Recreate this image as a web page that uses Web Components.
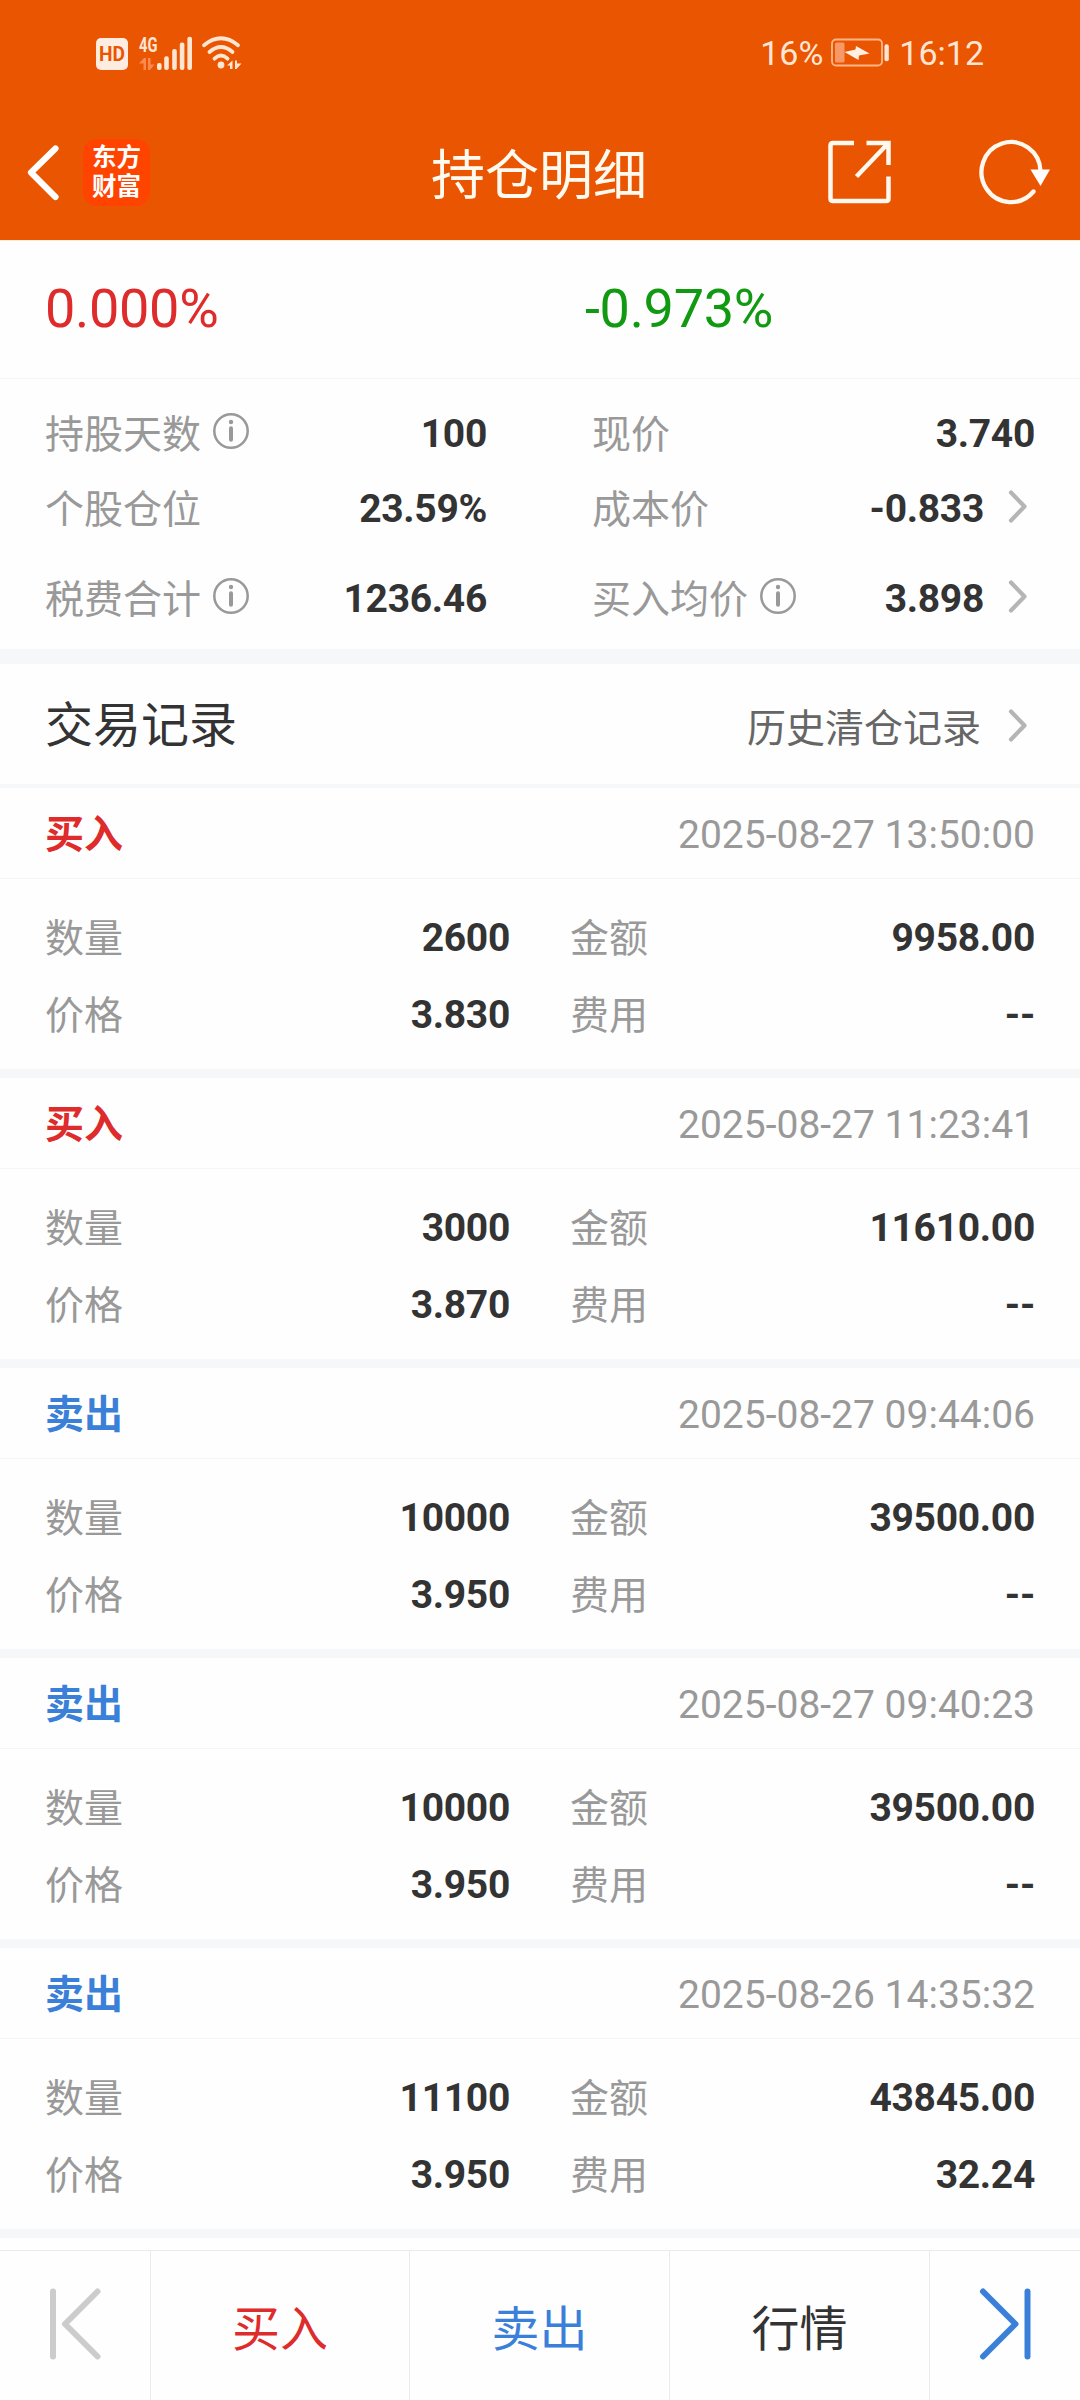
<!DOCTYPE html>
<html lang="zh-CN">
<head>
<meta charset="UTF-8">
<title>持仓明细</title>
<style>
    body{
        margin:0;
        width:1080px;
        height:2400px;
        overflow:hidden;
        background:#fefefe;
        font-family:Roboto, "Noto Sans CJK SC", sans-serif;
        --bar-color:#ea5502;
        --red:#de2b2b;
        --green:#119a11;
        --blue:#3a80d9;
        --text:#333;
        --label:#999;
        --line:#f5f6f7;
        --band:#f6f7f9;
    }
</style>
</head>
<body>
<position-page></position-page>

<script>
// base class, every component only gives its template and its styles
class BaseElement extends HTMLElement{
    constructor(){
        super();
        this.attachShadow({mode:"open"});
    }
    attr(name){
        return this.getAttribute(name) || '';
    }
    getTemplate(){
        const template = document.createElement('template');
        template.innerHTML = `
            <style>${this.getStyles()}</style>
            ${this.getMarkup()}
        `;
        return template;
    }
    render(){
        this.shadowRoot.appendChild(this.getTemplate().content.cloneNode(true));
    }
    connectedCallback(){
        if(!this.shadowRoot.hasChildNodes()) this.render();
    }
}

const ICONS = {
    hd:`<svg width="32" height="32" viewBox="0 0 32 32"><rect width="32" height="32" rx="5" fill="#ffece0"/><text x="16" y="23" text-anchor="middle" textLength="26" lengthAdjust="spacingAndGlyphs" font-family="Roboto" font-size="20.5" font-weight="700" fill="#ea5502">HD</text></svg>`,
    signal:`<svg width="54" height="35" viewBox="0 0 54 35" fill="#ffe6d3">
        <text x="0" y="16" textLength="18.5" lengthAdjust="spacingAndGlyphs" font-family="Roboto" font-size="20.5" font-weight="700">4G</text>
        <g fill="#fa8a50"><path d="M0 27.500 5 22h2v12H4.500v-6.500zM9 22h2.500v6.500H15.500l-4.500 5.500H9z"/></g>
        <rect x="18" y="27" width="4.6" height="7" rx="2"/>
        <rect x="25.2" y="20.3" width="4.6" height="13.700" rx="2"/>
        <rect x="33.2" y="13" width="4.6" height="21" rx="2"/>
        <rect x="40.800" y="6.500" width="4.600" height="27.500" rx="2"/>
        <rect x="48.400" y=".7" width="4.600" height="33.300" rx="2"/>
    </svg>`,
    wifi:`<svg width="40" height="34" viewBox="0 0 40 34" fill="none" stroke="#ffe6d3" stroke-width="3.800" stroke-linecap="round">
        <path d="M2 9.200Q19 -4.600 36 9.200M7.500 16Q19 6 30.500 16M12.500 22.700Q19 16.500 25.500 22.700"/>
        <circle cx="19" cy="29" r="3.400" fill="#ffe6d3" stroke="none"/>
        <path d="M25 29.500 30.500 24.500v8.500h-2.500v-3.500zM33 24.500h2v3h4.500l-5 5.500h-1.500z" fill="#ffe6d3" stroke="none"/>
    </svg>`,
    battery:`<svg width="58" height="30" viewBox="0 0 58 30"><rect x="1" y="1.500" width="50" height="26" rx="4" fill="none" stroke="#ffb789" stroke-width="1.800"/><rect x="4" y="4.500" width="9.500" height="20" rx="1.500" fill="#f69966"/><path d="M13.500 14 24.500 11.500 25 8 38.500 15.500 28 17.500 27.500 22z" fill="#fff0e2"/><rect x="53.500" y="6.300" width="4.300" height="17" rx="2" fill="#ffe6d3"/></svg>`,
    back:`<svg width="32" height="56" viewBox="0 0 32 56"><path d="M28.500 4.500 4 28.500 28.500 53" fill="none" stroke="#fff" stroke-width="6.200" stroke-linecap="round" stroke-linejoin="round"/></svg>`,
    open:`<svg width="64" height="64" viewBox="0 0 64 64" fill="none" stroke="#fff8ef" stroke-width="4.500"><path d="M26 3H5Q2.500 3 2.500 5.500V58.500Q2.500 61 5 61H58Q60.500 61 60.500 58.500V36.500M60.500 25V3H38.500M60 3.500 28.500 36.500"/></svg>`,
    refresh:`<svg width="72" height="64" viewBox="0 0 72 64"><path d="M54.500 51.500A29.500 30 0 1 1 61.500 31" fill="none" stroke="#fff8ef" stroke-width="4.300" stroke-linecap="round"/><path d="M51.500 29.500H71L61.500 46z" fill="#fff"/></svg>`,
    info:`<svg width="36" height="36" viewBox="0 0 36 36"><circle cx="18" cy="18" r="16.700" fill="none" stroke="#999" stroke-width="2.500"/><circle cx="18" cy="9" r="2.200" fill="#999"/><path d="M18 15.200V26.800" stroke="#999" stroke-width="4" stroke-linecap="round"/></svg>`,
    arrow:`<svg width="18" height="33" viewBox="0 0 18 33"><path d="M2 2.500 15.500 16.500 2 30.500" fill="none" stroke="#b5b5b5" stroke-width="4.200" stroke-linecap="round" stroke-linejoin="round"/></svg>`,
    first:`<svg width="51" height="72" viewBox="0 0 51 72" fill="none" stroke="#ccc" stroke-width="6" stroke-linecap="round" stroke-linejoin="round"><path d="M3 3.500V68.500M47.500 3.500 15 36 47.500 68.500"/></svg>`,
    last:`<svg width="51" height="72" viewBox="0 0 51 72" fill="none" stroke="#3a80d9" stroke-width="6" stroke-linecap="round" stroke-linejoin="round"><path d="M47.500 3.500V68.500M3 3.500 35.500 36 3 68.500"/></svg>`
};

class AppIcon extends BaseElement{
    getMarkup(){
        return ICONS[this.attr('name')];
    }
    getStyles(){
        return `
        :host{ display:block; flex:none; }
        svg{ display:block; overflow:visible; }
        `;
    }
}
customElements.define('app-icon', AppIcon);

class StatusBar extends BaseElement{
    getMarkup(){
        return `
            <app-icon name="hd"></app-icon>
            <app-icon name="signal"></app-icon>
            <app-icon name="wifi"></app-icon>
            <span class="battery">16%</span>
            <app-icon name="battery"></app-icon>
            <span class="time">16:12</span>
        `;
    }
    getStyles(){
        return `
        :host{
            display:flex;
            align-items:center;
            height:106px;
            padding:0 96px 0 96px;
            box-sizing:border-box;
            background:var(--bar-color);
            color:#ffe6d3;
            font-size:34px;
            line-height:40px;
        }
        app-icon[name=hd]{ margin:2px 11px 0 0; }
        app-icon[name=signal]{ margin-right:9px; }
        app-icon[name=battery]{ margin:0 10px 0 8px; }
        .battery{ margin-left:auto; }
        `;
    }
}
customElements.define('status-bar', StatusBar);

class NavBar extends BaseElement{
    getMarkup(){
        return `
            <div class="left">
                <app-icon name="back"></app-icon>
                <div class="logo">东方<br>财富</div>
            </div>
            <h1><slot></slot></h1>
            <div class="right">
                <app-icon name="open"></app-icon>
                <app-icon name="refresh"></app-icon>
            </div>
        `;
    }
    getStyles(){
        return `
        :host{
            display:grid;
            grid-template-columns:1fr auto 1fr;
            align-items:center;
            height:135px;
            padding:0 29px 2px 27px;
            box-sizing:border-box;
            border-bottom:1px solid #ffeeda;
            background:var(--bar-color);
            color:#fffaf0;
        }
        .left,.right{
            display:flex;
            align-items:center;
        }
        .left{ gap:24px; }
        .right{ justify-content:flex-end; gap:87px; }
        .logo{
            width:67px;
            height:67px;
            padding-top:4px;
            box-sizing:border-box;
            border-radius:14px;
            background:#ff4400;
            color:#fff;
            font-size:24.500px;
            font-weight:700;
            line-height:29.500px;
            text-align:center;
        }
        h1{
            margin:10px 0 0;
            font-size:54px;
            font-weight:400;
            line-height:64px;
        }
        `;
    }
}
customElements.define('nav-bar', NavBar);

class YieldHead extends BaseElement{
    getMarkup(){
        return `
            <span class="up">${this.attr('total')}</span>
            <span class="down">${this.attr('today')}</span>
        `;
    }
    getStyles(){
        return `
        :host{
            display:grid;
            grid-template-columns:540px 1fr;
            align-items:center;
            height:138px;
            padding:0 45px 1px;
            box-sizing:border-box;
            border-bottom:1px solid var(--line);
            font-size:54px;
            line-height:64px;
            letter-spacing:-.300px;
        }
        .up{ color:var(--red); }
        .down{ color:var(--green); }
        `;
    }
}
customElements.define('yield-head', YieldHead);

// label + value, with optional info icon and arrow
class StatCell extends BaseElement{
    getMarkup(){
        return `
            <span class="label"><slot></slot></span>
            ${this.hasAttribute('info') ? '<app-icon name="info"></app-icon>' : ''}
            <b>${this.attr('value')}</b>
            ${this.hasAttribute('arrow') ? '<app-icon name="arrow"></app-icon>' : ''}
        `;
    }
    getStyles(){
        return `
        :host{
            display:flex;
            align-items:center;
            height:60px;
            font-size:39px;
            line-height:60px;
        }
        .label{
            padding-top:1px;
            color:var(--label);
        }
        b{
            margin-left:auto;
            color:var(--text);
            font-weight:700;
            letter-spacing:-.300px;
        }
        app-icon[name=info]{ margin:0 0 6px 12px; }
        app-icon[name=arrow]{ margin:0 8px 6px 25px; }
        `;
    }
}
customElements.define('stat-cell', StatCell);

class StockSummary extends BaseElement{
    getMarkup(){
        return `<slot></slot>`;
    }
    getStyles(){
        return `
        :host{
            display:grid;
            grid-template-columns:442px 443px;
            grid-template-rows:75px 90px 60px;
            column-gap:105px;
            padding:25px 45px 20px 45px;
            border-bottom:15px solid var(--band);
        }
        `;
    }
}
customElements.define('stock-summary', StockSummary);

class RecordTitle extends BaseElement{
    getMarkup(){
        return `
            <h2><slot></slot></h2>
            <span>${this.attr('link')}</span>
            <app-icon name="arrow"></app-icon>
        `;
    }
    getStyles(){
        return `
        :host{
            display:flex;
            align-items:center;
            height:124px;
            padding:0 53px 0 45px;
            box-sizing:border-box;
            border-bottom:4px solid var(--band);
        }
        h2{
            margin:4px auto 0 0;
            color:var(--text);
            font-size:48px;
            font-weight:400;
            line-height:60px;
        }
        span{
            margin-top:10px;
            color:#666;
            font-size:39px;
            line-height:50px;
        }
        app-icon{ margin:3px 0 0 28px; }
        `;
    }
}
customElements.define('record-title', RecordTitle);

class TradeRecord extends BaseElement{
    getMarkup(){
        const buy = this.attr('type') === 'buy';
        return `
            <header>
                <strong class="${this.attr('type')}">${buy ? '买入' : '卖出'}</strong>
                <time>${this.attr('time')}</time>
            </header>
            <div class="body">
                <stat-cell value="${this.attr('count')}">数量</stat-cell>
                <stat-cell value="${this.attr('amount')}">金额</stat-cell>
                <stat-cell value="${this.attr('price')}">价格</stat-cell>
                <stat-cell value="${this.attr('fee')}">费用</stat-cell>
            </div>
        `;
    }
    getStyles(){
        return `
        :host{
            display:block;
            border-bottom:9px solid var(--band);
        }
        header{
            display:flex;
            align-items:center;
            justify-content:space-between;
            height:91px;
            padding:3px 45px 0 45px;
            box-sizing:border-box;
            border-bottom:1px solid var(--line);
            font-size:39px;
            line-height:60px;
        }
        strong{
            padding-top:1px;
            color:var(--blue);
        }
        .buy{ color:var(--red); }
        time{ color:var(--label); }
        .body{
            display:grid;
            grid-template-columns:465px 465px;
            grid-template-rows:77px 60px;
            column-gap:60px;
            padding:29px 45px 24px 45px;
        }
        `;
    }
}
customElements.define('trade-record', TradeRecord);

class ToolBar extends BaseElement{
    getMarkup(){
        return `
            <div><app-icon name="first"></app-icon></div>
            <div class="buy">买入</div>
            <div class="sell">卖出</div>
            <div>行情</div>
            <div><app-icon name="last"></app-icon></div>
        `;
    }
    getStyles(){
        return `
        :host{
            display:grid;
            grid-template-columns:151px 259px 260px 260px 150px;
            height:150px;
            margin-top:12px;
            box-sizing:border-box;
            border-top:1px solid #ebebeb;
            color:var(--text);
            font-size:48px;
            line-height:60px;
        }
        div{
            display:flex;
            align-items:center;
            justify-content:center;
            padding-top:8px;
            border-right:1px solid #ebebeb;
        }
        div:last-child{ border-right:0; }
        app-icon{ margin-bottom:12px; }
        .buy{ color:var(--red); }
        .sell{ color:var(--blue); }
        `;
    }
}
customElements.define('tool-bar', ToolBar);

class PositionPage extends BaseElement{
    getMarkup(){
        return `
            <status-bar></status-bar>
            <nav-bar>持仓明细</nav-bar>
            <yield-head total="0.000%" today="-0.973%"></yield-head>
            <stock-summary>
                <stat-cell value="100" info>持股天数</stat-cell>
                <stat-cell value="3.740">现价</stat-cell>
                <stat-cell value="23.59%">个股仓位</stat-cell>
                <stat-cell value="-0.833" arrow>成本价</stat-cell>
                <stat-cell value="1236.46" info>税费合计</stat-cell>
                <stat-cell value="3.898" info arrow>买入均价</stat-cell>
            </stock-summary>
            <record-title link="历史清仓记录">交易记录</record-title>
            <trade-record type="buy" time="2025-08-27 13:50:00" count="2600" amount="9958.00" price="3.830" fee="--"></trade-record>
            <trade-record type="buy" time="2025-08-27 11:23:41" count="3000" amount="11610.00" price="3.870" fee="--"></trade-record>
            <trade-record type="sell" time="2025-08-27 09:44:06" count="10000" amount="39500.00" price="3.950" fee="--"></trade-record>
            <trade-record type="sell" time="2025-08-27 09:40:23" count="10000" amount="39500.00" price="3.950" fee="--"></trade-record>
            <trade-record type="sell" time="2025-08-26 14:35:32" count="11100" amount="43845.00" price="3.950" fee="32.24"></trade-record>
            <tool-bar></tool-bar>
        `;
    }
    getStyles(){
        return `
        :host{
            display:flex;
            flex-direction:column;
        }
        `;
    }
}
customElements.define('position-page', PositionPage);
</script>
</body>
</html>
